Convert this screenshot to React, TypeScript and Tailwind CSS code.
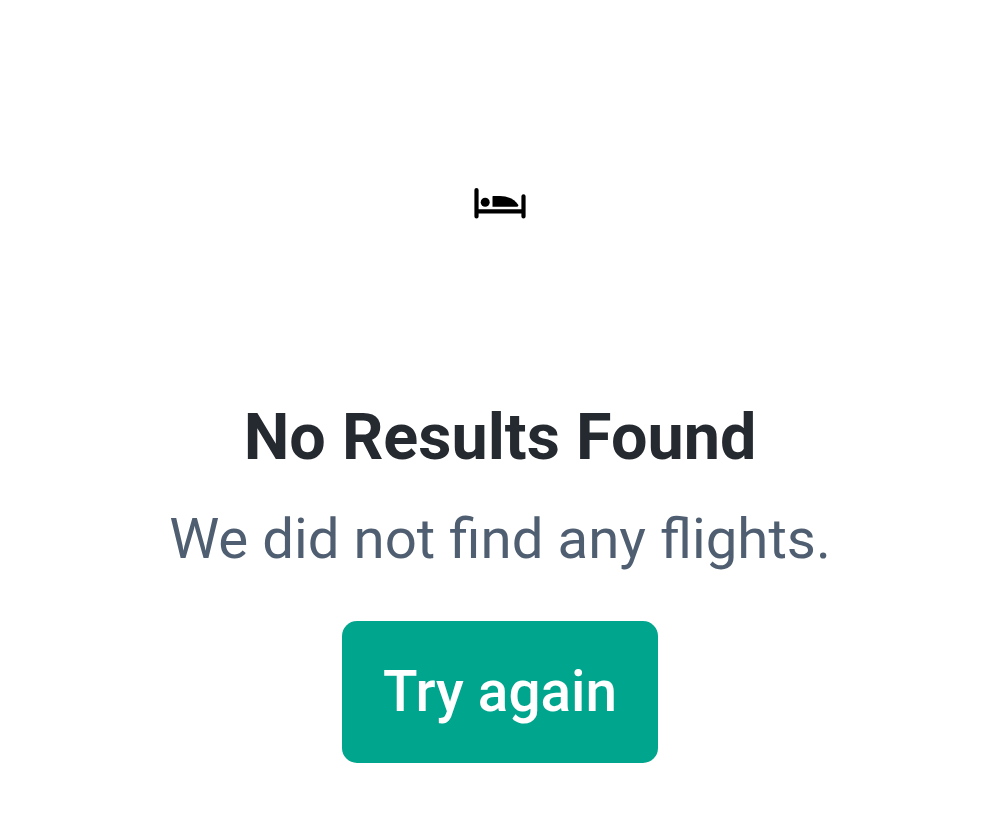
export default function App() {
  return (
    <main className="flex h-[814px] w-full flex-col items-center bg-white font-['Roboto',sans-serif]">
      <svg className="mt-[187px] h-8 w-[52px] shrink-0" viewBox="0 0 52 32" fill="none" aria-hidden="true">
        <path d="M2.500 3V29.500M49.500 9.300V29.500M2.500 24.300H49.500" stroke="#000" strokeWidth="4.200" strokeLinecap="round" />
        <circle cx="11.200" cy="15.300" r="4.500" fill="#000" />
        <path d="M18.500 19.700V9.500Q18.500 9 19 9H26C34 9 41 12.500 44.200 17.800Q44.800 19.700 42.500 19.700Z" fill="#000" />
      </svg>
      <h1 className="mt-[178px] text-[64.7px] leading-[80px] font-bold whitespace-nowrap text-[#252a31]">No Results Found</h1>
      <p className="mt-[22px] text-[56.4px] leading-[80px] whitespace-nowrap text-[#4f5e71]">We did not find any flights.</p>
      <button className="mt-[42px] h-[142px] w-[316px] shrink-0 rounded-[15px] bg-[#00a58e] text-[56.7px] leading-[80px] font-medium text-white">Try again</button>
    </main>
  );
}
